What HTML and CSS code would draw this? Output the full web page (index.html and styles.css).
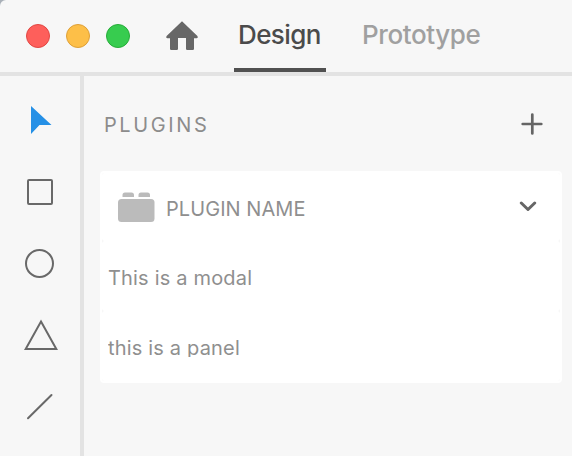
FILE: index.html
```html
<!DOCTYPE html>
<html lang="en">
<head>
<meta charset="utf-8">
<title>Plugins</title>
<link rel="stylesheet" href="styles.css">
</head>
<body>
<div class="window">
  <header class="titlebar">
    <div class="lights"><i class="light red"></i><i class="light yellow"></i><i class="light green"></i></div>
    <svg class="home" width="34" height="32" viewBox="0 0 34 32"><path d="M17 1.2 32.4 16Q33.4 18.2 31.5 18.2H29V28.8Q29 30 27.8 30H22.2Q21 30 21 28.8V18H13V28.8Q13 30 11.8 30H6.200Q5 30 5 28.800V18.200H2.500Q.6 18.200 1.600 16Z" fill="#676767"/></svg>
    <nav class="tabs">
      <a class="tab active"><span class="design">Design</span></a>
      <a class="tab"><span class="prototype">Prototype</span></a>
    </nav>
  </header>
  <div class="body">
    <aside class="tools">
      <svg class="tool" width="80" height="72" viewBox="0 0 80 72"><path d="M31 30 51.500 49H39.500L31 58Z" fill="#2590e6"/></svg>
      <svg class="tool" width="80" height="72" viewBox="0 0 80 72"><rect x="28" y="32" width="24" height="24" rx="1" class="line"/></svg>
      <svg class="tool" width="80" height="72" viewBox="0 0 80 72"><circle cx="39.500" cy="43.500" r="13.500" class="line"/></svg>
      <svg class="tool" width="80" height="72" viewBox="0 0 80 72"><path d="M41 29.500 56.300 57H25.700Z" class="line"/></svg>
      <svg class="tool" width="80" height="72" viewBox="0 0 80 72"><path d="M28 54.300 51.500 31" class="line round"/></svg>
    </aside>
    <main class="panel">
      <div class="heading"><h1>PLUGINS</h1>
        <svg width="24" height="24" viewBox="0 0 24 24"><path d="M2.700 12H21.300M12.300 2.500V21.500" class="plus"/></svg>
      </div>
      <section class="card">
        <div class="row header">
          <svg width="38" height="32" viewBox="0 0 38 32"><g fill="#bbb"><path d="M4.500 6V4Q4.500 1.500 7 1.500H13.500Q16 1.500 16 4V6ZM20.500 6V4Q20.500 1.500 23 1.500H29.500Q32 1.500 32 4V6Z"/><rect y="8" width="36.500" height="23" rx="3.500"/></g></svg>
          <span class="name">PLUGIN NAME</span>
          <svg class="chevron" width="18" height="12" viewBox="0 0 18 12"><path d="M2.300 2 9 8.500 15.700 2"/></svg>
        </div>
        <div class="row item"><span class="modal">This is a modal</span></div>
        <div class="row item"><span class="panel-label">this is a panel</span></div>
      </section>
    </main>
  </div>
</div>
</body>
</html>
```
FILE: styles.css
```css
* { box-sizing: border-box; }
body { margin: 0; background: #a9b0b8; font-family: Inter, "Liberation Sans", sans-serif; }
.window { width: 572px; height: 456px; background: #f7f7f7; border-top-left-radius: 6px; overflow: hidden; }
.titlebar { height: 76px; border-bottom: 4px solid #e3e3e3; display: flex; align-items: flex-start; }
.lights { display: flex; gap: 16px; margin: 24px 0 0 26px; }
.light { width: 24px; height: 24px; border-radius: 50%; border: 1px solid; }
.red { background: #fe5f5b; border-color: #e14743; }
.yellow { background: #fdbf48; border-color: #dea038; }
.green { background: #37cc4f; border-color: #27ac39; }
.home { margin: 20px 0 0 35px; }
.tabs { display: flex; margin-left: 35px; }
.tab { height: 72px; padding-top: 19px; font-size: 26px; line-height: 32px; font-weight: 500; color: #a0a0a0; white-space: nowrap; }
.active { width: 92px; padding-left: 4px; border-bottom: 4px solid #515151; color: #4b4b4b; }
.design { letter-spacing: -0.6px; }
.prototype { margin-left: 36px; letter-spacing: -0.4px; }
.body { display: flex; height: 380px; }
.tools { width: 84px; border-right: 4px solid #e3e3e3; }
.tool { display: block; }
.line { fill: none; stroke: #696969; stroke-width: 2; }
.round { stroke-linecap: round; }
.panel { flex: 1; padding: 0 10px 0 16px; }
.heading { height: 95px; padding: 36px 18px 0 4px; display: flex; justify-content: space-between; }
h1 { margin: 1px 0 0; font-size: 20px; line-height: 24px; font-weight: 400; letter-spacing: 2.6px; color: #8c8c8c; }
.plus { stroke: #656565; stroke-width: 2.7; stroke-linecap: round; }
.card { height: 212px; border: 2px solid #fff; border-radius: 4px; background: #f7f7f7; }
.row { height: 70px; display: flex; background: #fff; border-radius: 3px; color: #8f8f8f; font-size: 20px; line-height: 24px; white-space: nowrap; }
.header { height: 68px; padding: 18px 23px 0 16px; }
.name { margin: 6px auto 0 10px; letter-spacing: 0.06px; }
.chevron { margin-top: 10px; fill: none; stroke: #666; stroke-width: 3; stroke-linecap: round; stroke-linejoin: round; }
.item { padding: 25px 0 0 6px; }
.modal { letter-spacing: 0.18px; }
.panel-label { height: 21px; overflow: hidden; letter-spacing: 0.18px; }
```
